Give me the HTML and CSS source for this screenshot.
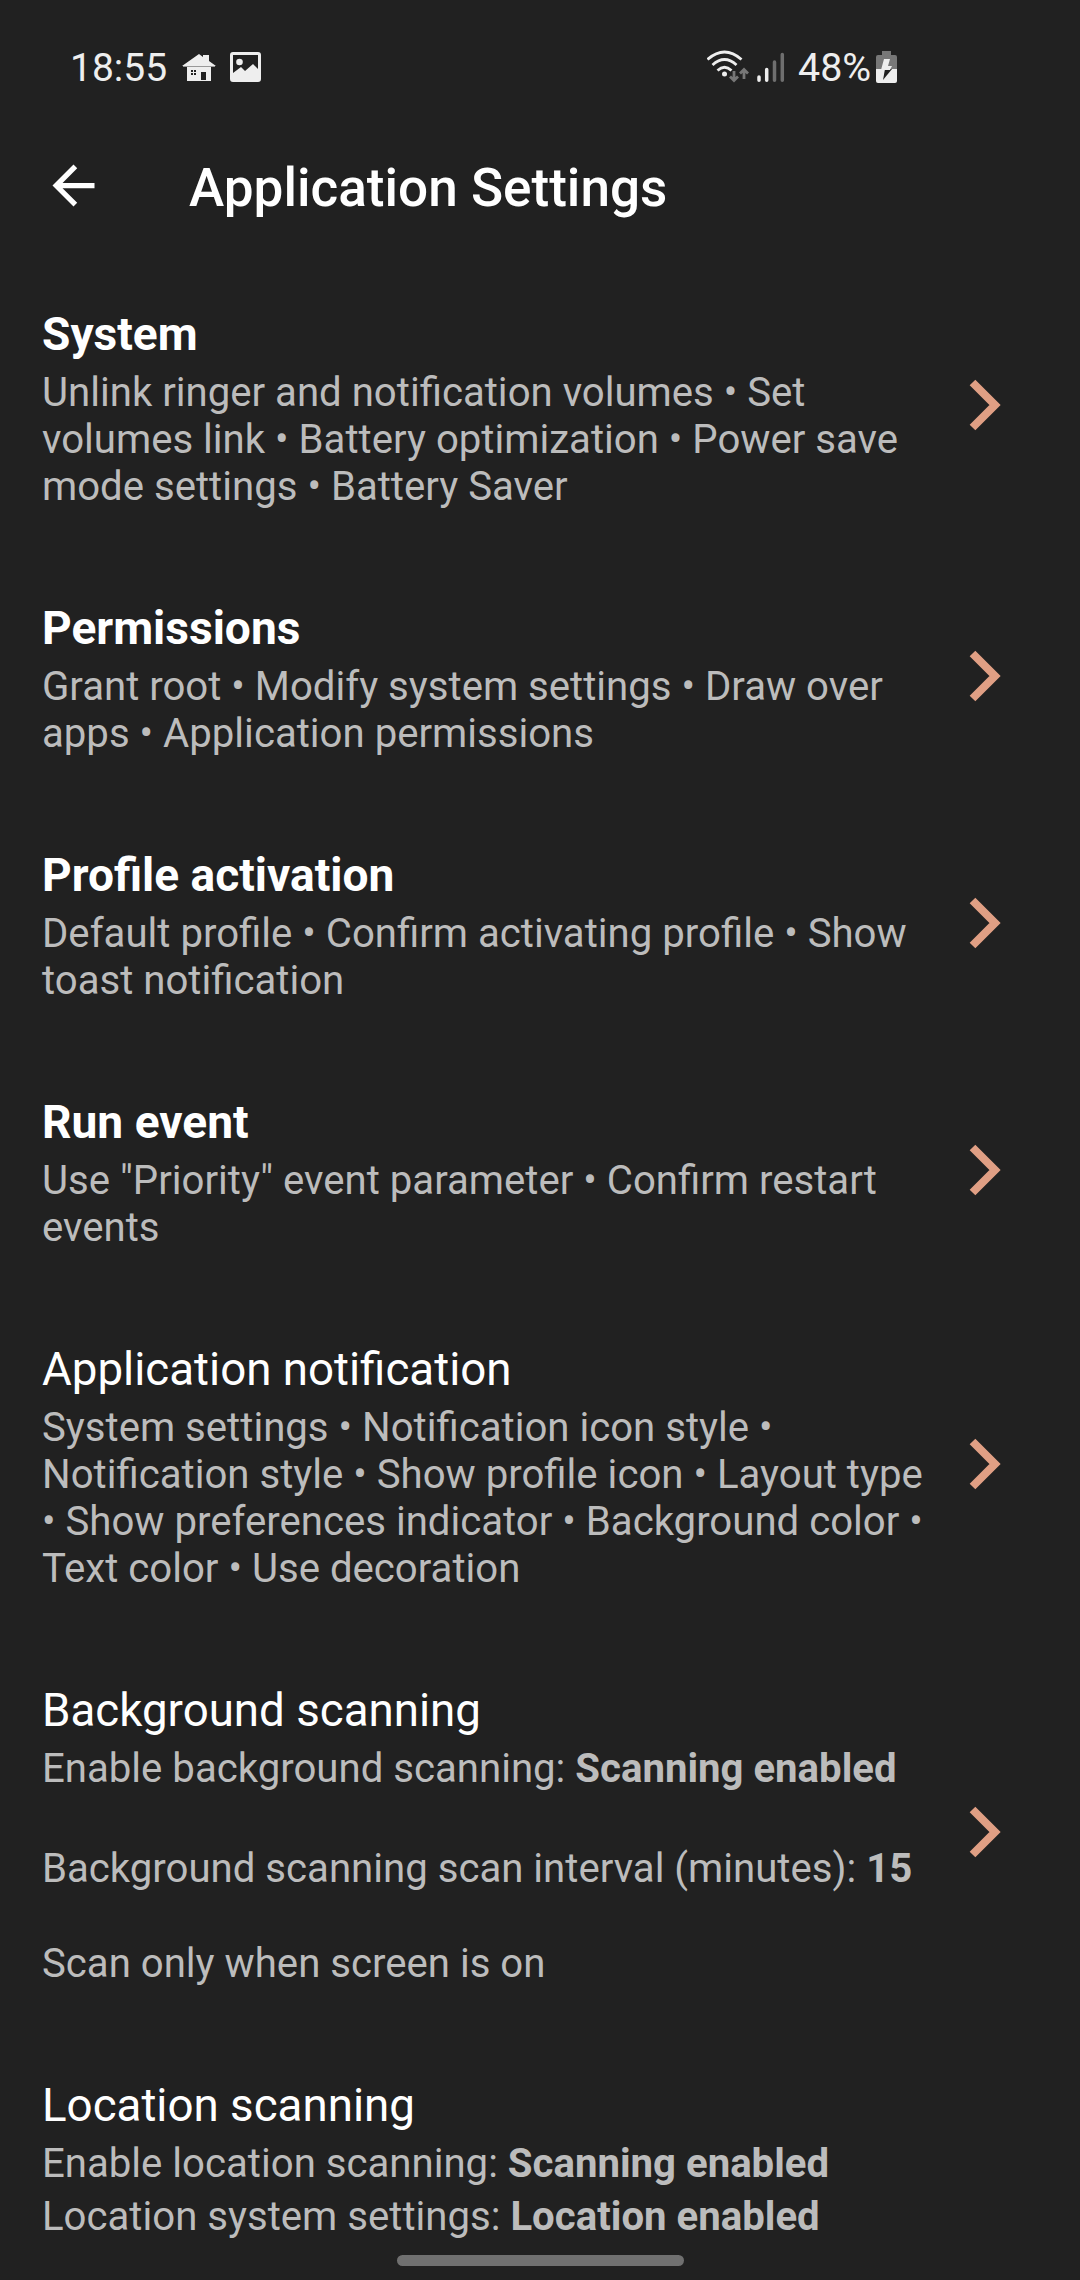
FILE: index.html
```html
<!DOCTYPE html>
<html lang="en">
<head>
<meta charset="utf-8">
<title>Application Settings</title>
<link rel="stylesheet" href="styles.css">
</head>
<body>
<div class="screen">
  <header class="status">
    <span class="clock">18:55</span>
    <svg class="house" width="34" height="28" viewBox="0 0 34 28"><path fill="#eee" fill-rule="evenodd" d="M0 12 17 0l4 3V1h6v6l7 5H29v15H5V12zM9 16v5h5v-5zM19 18v8h5v-8z"/><path stroke="#eee" stroke-width="1" d="M11.500 16v5M9 18.500h5"/><path stroke="#999" stroke-width="1" d="M1 12.500h32"/></svg>
    <svg class="picture" width="31" height="30" viewBox="0 0 31 30"><path fill="#eee" fill-rule="evenodd" d="M3 0h25a3 3 0 0 1 3 3v24a3 3 0 0 1-3 3H3a3 3 0 0 1-3-3V3a3 3 0 0 1 3-3zM3 3v18l8-6 4 4 8-7 5 5V3z"/><circle cx="9.500" cy="10" r="3.300" fill="#eee"/></svg>
    <svg class="wifi" width="42" height="33" viewBox="0 0 42 33"><g fill="none" stroke="#eee" stroke-width="2.800"><path d="M.5 9.500Q17.500-5.500 34.500 9.500"/><path d="M5.500 15Q17.500 4 29.500 15"/><path d="M10.500 20.500Q17.500 14 24.500 20.500"/></g><circle cx="17.500" cy="24" r="2.500" fill="#eee"/><path fill="none" stroke="#777" stroke-width="2.800" d="M27 21v10M23 26.500l4 4 4-4M37 29V19M33 23.500l4-4 4 4"/></svg>
    <svg class="signal" width="28" height="31" viewBox="0 0 28 31"><path stroke="#eee" stroke-width="3.500" stroke-linecap="round" d="M2 25v3.300M9.700 17.500V28.300"/><path stroke="#6f6f6f" stroke-width="3.500" stroke-linecap="round" d="M17.500 10v18.300M25.300 2.500V28.300"/></svg>
    <span class="percent">48%</span>
    <svg class="battery" width="21" height="32" viewBox="0 0 21 32"><path fill="#777" d="M6 0h9v4h4a2 2 0 0 1 2 2v13H0V6a2 2 0 0 1 2-2h4z"/><path fill="#eee" d="M0 18h21v12a2 2 0 0 1-2 2H2a2 2 0 0 1-2-2z"/><path fill="#212121" d="M9 18h7L7 29z"/><path fill="#eee" d="M8 8h6l-2 7h4l-2 4H5z"/></svg>
  </header>
  <div class="toolbar">
    <svg class="back" width="63" height="63" viewBox="0 0 24 24"><path fill="#fff" d="M20 11H7.830l5.590-5.590L12 4l-8 8 8 8 1.410-1.410L7.830 13H20z"/></svg>
    <h1>Application Settings</h1>
  </div>
  <main>
    <section class="row">
      <div class="text"><h2 class="bold">System</h2><p>Unlink ringer and notification volumes • Set<br>volumes link • Battery optimization • Power save<br>mode settings • Battery Saver</p></div>
      <svg class="chevron" viewBox="0 0 32 52"><path d="M3.500 3.500 26 26 3.500 48.500"/></svg>
    </section>
    <section class="row">
      <div class="text"><h2 class="bold">Permissions</h2><p>Grant root • Modify system settings • Draw over<br>apps • Application permissions</p></div>
      <svg class="chevron" viewBox="0 0 32 52"><path d="M3.500 3.500 26 26 3.500 48.500"/></svg>
    </section>
    <section class="row">
      <div class="text"><h2 class="bold">Profile activation</h2><p>Default profile • Confirm activating profile • Show<br>toast notification</p></div>
      <svg class="chevron" viewBox="0 0 32 52"><path d="M3.500 3.500 26 26 3.500 48.500"/></svg>
    </section>
    <section class="row">
      <div class="text"><h2 class="bold">Run event</h2><p>Use "Priority" event parameter • Confirm restart<br>events</p></div>
      <svg class="chevron" viewBox="0 0 32 52"><path d="M3.500 3.500 26 26 3.500 48.500"/></svg>
    </section>
    <section class="row">
      <div class="text"><h2>Application notification</h2><p>System settings • Notification icon style •<br>Notification style • Show profile icon • Layout type<br>• Show preferences indicator • Background color •<br>Text color • Use decoration</p></div>
      <svg class="chevron" viewBox="0 0 32 52"><path d="M3.500 3.500 26 26 3.500 48.500"/></svg>
    </section>
    <section class="row">
      <div class="text spaced"><h2>Background scanning</h2><p>Enable background scanning: <b>Scanning enabled</b></p><p>Background scanning scan interval (minutes): <b>15</b></p><p>Scan only when screen is on</p></div>
      <svg class="chevron" viewBox="0 0 32 52"><path d="M3.500 3.500 26 26 3.500 48.500"/></svg>
    </section>
    <section class="row">
      <div class="text loose"><h2>Location scanning</h2><p>Enable location scanning: <b>Scanning enabled</b></p><p>Location system settings: <b>Location enabled</b></p></div>
    </section>
  </main>
  <div class="handle"></div>
</div>
</body>
</html>
```
FILE: styles.css
```css
* { box-sizing: border-box; }
body { margin: 0; background: #212121; }
.screen {
  position: relative;
  width: 1080px;
  height: 2280px;
  overflow: hidden;
  background: #212121;
  color: #fff;
  font-family: Roboto, "Noto Sans", sans-serif;
}
svg { display: block; flex: none; }
h1, h2, p { margin: 0; font-weight: 400; white-space: nowrap; }

.status {
  display: flex;
  align-items: flex-start;
  height: 137px;
  padding: 45px 0 0 70px;
  color: #eee;
  font-size: 39.400px;
  line-height: 46px;
}
.clock { width: 112px; font-size: 39px; }
.house { margin-top: 9px; }
.picture { margin: 7px 0 0 14px; }
.wifi { margin: 5px 0 0 446px; }
.signal { margin: 7px 0 0 8px; }
.percent { width: 72px; margin-left: 13px; }
.battery { margin: 6px 0 0 6px; }

.toolbar {
  display: flex;
  align-items: center;
  height: 98px;
  padding-left: 42px;
}
.back { margin-bottom: 1px; }
h1 {
  margin: 4px 0 0 84px;
  font-size: 53.100px;
  font-weight: 500;
  line-height: 62px;
}

main { padding-top: 27px; }
.row {
  display: flex;
  align-items: center;
  padding: 46px 79px 46px 42px;
}
.text { flex: 1; }
h2 { margin-bottom: 8px; font-size: 45.700px; line-height: 53px; }
h2.bold { font-size: 46.100px; }
h2.bold, b { font-weight: 700; }
p { color: #bcbcbc; font-size: 40.150px; line-height: 47px; }
.spaced p + p { margin-top: 53px; }
.spaced p + p + p { margin-top: 48px; }
.loose p + p { margin-top: 6px; }
.chevron { width: 32px; height: 52px; margin-bottom: 8px; }
.chevron path { fill: none; stroke: #e09f84; stroke-width: 8; }

.handle {
  position: absolute;
  bottom: 14px;
  left: 397px;
  width: 287px;
  height: 11px;
  border-radius: 6px;
  background: #707070;
}
```
